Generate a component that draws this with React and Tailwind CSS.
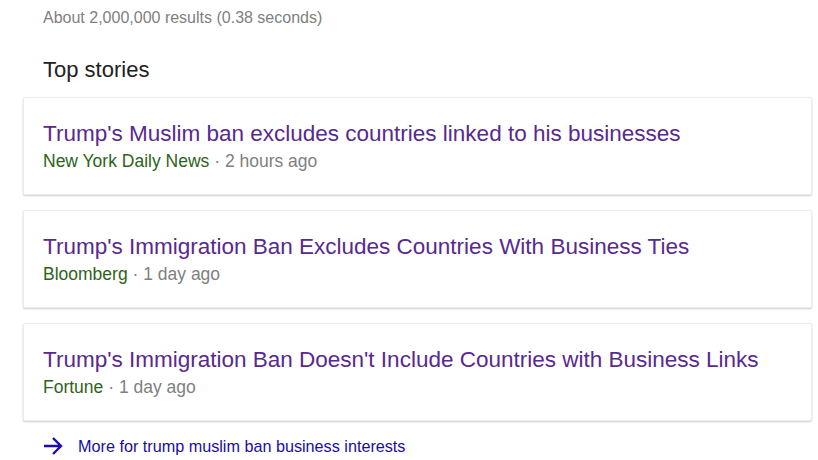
const stories = [
  { title: "Trump's Muslim ban excludes countries linked to his businesses", source: "New York Daily News", time: "2 hours ago" },
  { title: "Trump's Immigration Ban Excludes Countries With Business Ties", source: "Bloomberg", time: "1 day ago" },
  { title: "Trump's Immigration Ban Doesn't Include Countries with Business Links", source: "Fortune", time: "1 day ago" },
];

const StoryCard = ({ title, source, time }) => (
  <div className="bg-white rounded-[2px] border border-[#ececec] shadow-[0_1px_2px_rgba(0,0,0,0.2)] px-[19px] pt-[23px] pb-[21px]">
    <a href="#" className="block text-[22.5px] leading-[26px] text-[#58298f] whitespace-nowrap">{title}</a>
    <div className="text-[17.5px] leading-[24px] mt-[2px]">
      <span className="text-[#2e6319]">{source}</span>
      <span className="text-[#808080]"> · {time}</span>
    </div>
  </div>
);

export default function App() {
  return (
    <div className="w-[818px] h-[460px] bg-white overflow-hidden pl-[23px] pr-[6px] font-['Liberation_Sans',Arial,sans-serif]">
      {/* result stats */}
      <div className="pl-[20px] pt-[7px] text-[16px] leading-[22px] text-[#808080]">About 2,000,000 results (0.38 seconds)</div>

      {/* top stories */}
      <h3 className="pl-[20px] mt-[27px] text-[22px] leading-[28px] text-[#222]">Top stories</h3>

      <div className="mt-[13px] flex flex-col gap-[15px]">
        {stories.map((s) => (
          <StoryCard key={s.title} {...s} />
        ))}
      </div>

      {/* more link */}
      <a href="#" className="flex items-center gap-[15px] pl-[20px] mt-[14px] text-[16.2px] leading-[22px] text-[#1a0dab]">
        <svg width="20" height="20" viewBox="0 0 20 20" fill="none" stroke="#1a0dab" strokeWidth="2.4">
          <path d="M1 10h17M10 2l8 8-8 8" />
        </svg>
        <span>More for trump muslim ban business interests</span>
      </a>
    </div>
  );
}
